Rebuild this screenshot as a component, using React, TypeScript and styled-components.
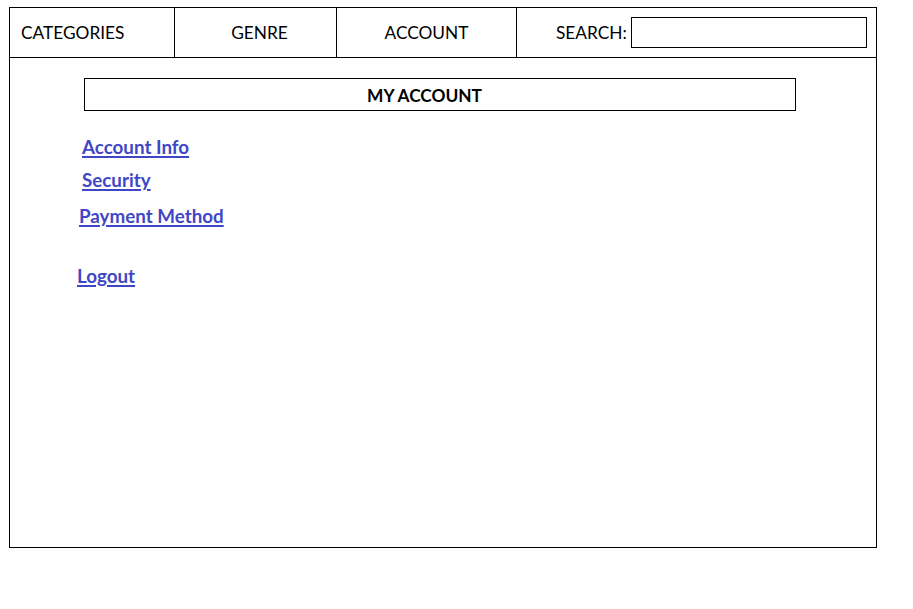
import React from "react";
import styled, { createGlobalStyle } from "styled-components";

const Global = createGlobalStyle`
  html, body { margin: 0; padding: 0; background: #fff; }
  body { font-family: "Lato", "Open Sans", sans-serif; color: #000; }
`;

const Frame = styled.div`
  margin: 7px 0 0 9px;
  width: 868px;
  height: 541px;
  box-sizing: border-box;
  border: 1px solid #000;
  display: flex;
  flex-direction: column;
`;

const Header = styled.nav`
  display: grid;
  grid-template-columns: 165px 162px 180px 1fr;
  height: 49px;
  border-bottom: 1px solid #000;
`;

const Cell = styled.div<{ $align?: "start" | "center"; $pad?: number; $last?: boolean }>`
  display: flex;
  align-items: center;
  justify-content: ${(p) => (p.$align === "start" ? "flex-start" : "center")};
  padding-left: ${(p) => p.$pad ?? 0}px;
  border-right: ${(p) => (p.$last ? "none" : "1px solid #000")};
  font-size: 17.3px;
`;

const SearchInput = styled.div`
  margin-left: 4px;
  width: 236px;
  height: 31px;
  box-sizing: border-box;
  border: 1px solid #000;
`;

const Content = styled.main`
  display: flex;
  flex-direction: column;
  padding: 20px 0 0 74px;
`;

const TitleBox = styled.div`
  width: 712px;
  height: 33px;
  box-sizing: border-box;
  border: 1px solid #000;
  display: flex;
  align-items: center;
  justify-content: center;
  padding: 1px 31px 0 0;
  font-weight: 700;
  font-size: 17.3px;
`;

const LinkList = styled.div`
  display: flex;
  flex-direction: column;
  align-items: flex-start;
`;

const NavLink = styled.a<{ $indent: number; $top: number }>`
  display: block;
  margin-left: ${(p) => p.$indent}px;
  margin-top: ${(p) => p.$top}px;
  color: #3f47c6;
  font-weight: 700;
  font-size: 18.8px;
  line-height: 20px;
  text-decoration: underline;
  text-decoration-thickness: 2px;
  text-underline-offset: 2px;
  cursor: pointer;
`;

export default function App() {
  return (
    <>
      <Global />
      <Frame>
        <Header>
          <Cell $align="start" $pad={11}>CATEGORIES</Cell>
          <Cell $pad={8}>GENRE</Cell>
          <Cell>ACCOUNT</Cell>
          <Cell $align="start" $pad={39} $last>
            SEARCH:
            <SearchInput />
          </Cell>
        </Header>
        <Content>
          <TitleBox>MY ACCOUNT</TitleBox>
          <LinkList>
            <NavLink $indent={-2} $top={26}>Account Info</NavLink>
            <NavLink $indent={-2} $top={13}>Security</NavLink>
            <NavLink $indent={-5} $top={16}>Payment Method</NavLink>
            <NavLink $indent={-7} $top={40}>Logout</NavLink>
          </LinkList>
        </Content>
      </Frame>
    </>
  );
}
